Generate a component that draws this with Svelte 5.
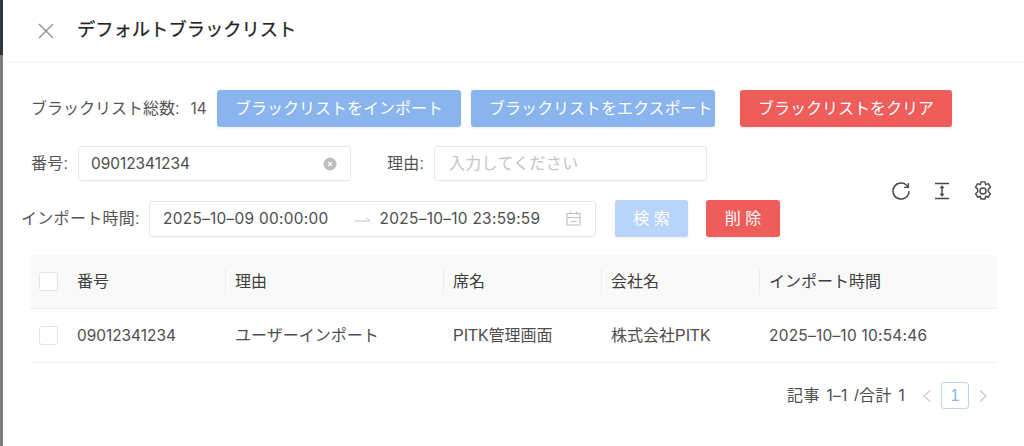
<script>
  const columns = [
    { key: 'number', label: '番号', width: 158 },
    { key: 'reason', label: '理由', width: 218 },
    { key: 'seat', label: '席名', width: 158 },
    { key: 'company', label: '会社名', width: 158 },
    { key: 'time', label: 'インポート時間', width: 228 }
  ];

  const rows = [
    {
      number: '09012341234',
      reason: 'ユーザーインポート',
      seat: 'PITK管理画面',
      company: '株式会社PITK',
      time: '2025–10–10 10:54:46'
    }
  ];

  const numeric = ['number', 'time'];
</script>

<div class="page">
  <div class="strip"></div>
  <div class="drawer">
    <header class="head">
      <svg class="close" viewBox="0 0 16 16" width="16" height="16" fill="none" stroke="#8c8c8c" stroke-width="1.3">
        <path d="M1 1l14 14M15 1L1 15" />
      </svg>
      <h1>デフォルトブラックリスト</h1>
    </header>

    <div class="body">
      <div class="actions">
        <span class="total">ブラックリスト総数:<span class="count num">14</span></span>
        <button class="btn soft wide">ブラックリストをインポート</button>
        <button class="btn soft wide">ブラックリストをエクスポート</button>
        <button class="btn danger clear">ブラックリストをクリア</button>
      </div>

      <div class="filters">
        <div class="fields">
          <div class="line first">
            <span class="label number-label">番号:</span>
            <div class="input number-input">
              <span class="num">09012341234</span>
              <svg class="clear-icon" viewBox="0 0 14 14" width="14" height="14">
                <circle cx="7" cy="7" r="6.5" fill="#bdbdbd" />
                <path d="M5 5l4 4M9 5l-4 4" stroke="#fff" stroke-width="1.2" />
              </svg>
            </div>
            <span class="label reason-label">理由:</span>
            <div class="input reason-input"><span class="placeholder">入力してください</span></div>
          </div>

          <div class="line second">
            <span class="label time-label">インポート時間:</span>
            <div class="input range">
              <span class="date num">2025–10–09 00:00:00</span>
              <svg class="arrow" viewBox="0 0 16 8" width="16" height="8" fill="none" stroke="#c4c4c4">
                <path d="M0 6h15L11 2.5" />
              </svg>
              <span class="date num">2025–10–10 23:59:59</span>
              <svg class="calendar" viewBox="0 0 15 15" width="15" height="15" fill="none" stroke="#bfbfbf" stroke-width="1.1">
                <path d="M1 2.5h13v11.5H1zM1 6.5h13M4.5 .5v3M10.5 .5v3M4.5 10.5h6" />
              </svg>
            </div>
            <button class="btn search">検 索</button>
            <button class="btn danger delete">削 除</button>
          </div>
        </div>

        <div class="tools">
          <svg viewBox="0 0 20 20" width="20" height="20" fill="none" stroke="#4a4a4a" stroke-width="1.5">
            <path d="M16.8 5.8A8 8 0 1 0 18 10" />
            <path d="M17.4 2v4.4H13" stroke-width="1.3" />
          </svg>
          <svg viewBox="0 0 20 20" width="20" height="20" fill="none" stroke="#4a4a4a" stroke-width="1.5">
            <path d="M3 2.5h14M3 17.5h14M10 6v8" />
            <path d="M8 7l2-2.4L12 7zM8 13l2 2.4 2-2.4z" fill="#4a4a4a" stroke-width="0.6" />
          </svg>
          <svg viewBox="1 1 18 18" width="20" height="20" fill="none" stroke="#4a4a4a" stroke-width="1.3" stroke-linejoin="round">
            <path d="M8.2 1.8h3.6l.6 2.5 2.4-.9 1.9 3.2-1.9 1.7v2.4l1.9 1.7-1.9 3.2-2.4-.9-.6 2.5H8.2l-.6-2.5-2.4.9-1.9-3.2 1.9-1.7V8.3L3.3 6.6l1.9-3.2 2.4.9z" />
            <circle cx="10" cy="10" r="2.7" />
          </svg>
        </div>
      </div>

      <div class="table">
        <div class="row header">
          <div class="check-cell"><span class="checkbox"></span></div>
          {#each columns as col, i}
            <div class="cell" class:divided={i > 0} style="width: {col.width}px">{col.label}</div>
          {/each}
        </div>
        {#each rows as row}
          <div class="row">
            <div class="check-cell"><span class="checkbox"></span></div>
            {#each columns as col}
              <div class="cell" class:num={numeric.includes(col.key)} class:stamp={col.key === 'time'} style="width: {col.width}px">{row[col.key]}</div>
            {/each}
          </div>
        {/each}
      </div>

      <div class="pager">
        <span class="summary">記事 <span class="num">1–1</span> /合計 <span class="num">1</span></span>
        <svg viewBox="0 0 10 14" width="10" height="14" fill="none" stroke="#c8c8c8" stroke-width="1.2">
          <path d="M8 1.5L2 7l6 5.5" />
        </svg>
        <span class="page-num">1</span>
        <svg viewBox="0 0 10 14" width="10" height="14" fill="none" stroke="#c8c8c8" stroke-width="1.2">
          <path d="M2 1.5L8 7l-6 5.5" />
        </svg>
      </div>
    </div>
  </div>
</div>

<style>
  :global(body) {
    margin: 0;
    background: #fff;
  }

  .page {
    display: flex;
    height: 446px;
    overflow: hidden;
    font-family: "Liberation Sans", "Noto Sans CJK JP", sans-serif;
    font-size: 16px;
    line-height: 24px;
    color: #4d4d4d;
  }

  .num {
    font-family: Inter, "Liberation Sans", sans-serif;
    font-size: 15.4px;
  }

  .strip {
    width: 3px;
    flex-shrink: 0;
    background: linear-gradient(#2f3542 0, #2f3542 55px, #7d7d7d 55px);
  }

  .drawer {
    flex: 1;
    min-width: 0;
  }

  .head {
    display: flex;
    align-items: center;
    height: 62px;
    padding-left: 35px;
    border-bottom: 1px solid #f3f3f3;
  }

  .close {
    margin-right: 23px;
  }

  h1 {
    margin: 0 0 2px;
    font-size: 18.3px;
    font-weight: 400;
    color: #222;
    -webkit-text-stroke: 0.25px #222;
  }

  .body {
    padding: 27px 27px 0 18px;
  }

  .actions {
    display: flex;
    align-items: center;
    height: 37px;
    padding-left: 10px;
  }

  .total {
    width: 186px;
    white-space: nowrap;
    color: #555;
  }

  .count {
    margin-left: 11px;
  }

  .btn {
    height: 37px;
    padding: 0;
    border: none;
    border-radius: 3px;
    color: #fff;
    font: inherit;
    box-shadow: 0 1px 3px rgba(0, 0, 0, 0.08);
    white-space: nowrap;
  }

  .soft {
    background: #8ab4ee;
  }

  .wide {
    width: 244px;
    margin-right: 10px;
    padding-left: 18px;
    text-align: left;
  }

  .danger {
    background: #ee5d5a;
  }

  .clear {
    width: 212px;
    margin-left: 15px;
  }

  .search {
    width: 73px;
    margin-left: 19px;
    background: #b8d4f8;
  }

  .delete {
    width: 74px;
    margin-left: 18px;
  }

  .filters {
    display: flex;
    margin-top: 19px;
  }

  .fields {
    flex: none;
    width: 850px;
  }

  .line {
    display: flex;
    align-items: center;
  }

  .first {
    height: 35px;
  }

  .second {
    height: 37px;
    margin-top: 19px;
  }

  .label {
    white-space: nowrap;
    color: #555;
    letter-spacing: 0.3px;
  }

  .number-label {
    margin-left: 10px;
    width: 47px;
  }

  .reason-label {
    margin-left: 36px;
    width: 47px;
  }

  .time-label {
    width: 128px;
  }

  .input {
    box-sizing: border-box;
    display: flex;
    align-items: center;
    height: 35px;
    padding: 0 12px;
    border: 1px solid #e6e6e6;
    border-radius: 3px;
    background: #fff;
  }

  .number-input {
    width: 273px;
    justify-content: space-between;
  }

  .clear-icon {
    margin-right: 1px;
  }

  .reason-input {
    width: 273px;
    padding-left: 14px;
  }

  .placeholder {
    color: #c4c4c4;
    letter-spacing: 0.3px;
  }

  .range {
    width: 447px;
    height: 36px;
    padding-left: 13px;
  }

  .date {
    white-space: nowrap;
    letter-spacing: 0.3px;
  }

  .stamp {
    letter-spacing: 0.27px;
  }

  .arrow {
    margin: 0 9px 0 26px;
  }

  .calendar {
    margin-left: 26px;
  }

  .tools {
    display: flex;
    gap: 21px;
    margin: 35px 0 0 20px;
  }

  .table {
    margin-top: 18px;
    margin-left: 9px;
    width: 967px;
  }

  .row {
    display: flex;
    align-items: center;
    height: 53px;
    border-bottom: 1px solid #f0f0f0;
    color: #4d4d4d;
  }

  .header {
    background: #f9f9f9;
    color: #3d3d3d;
  }

  .check-cell {
    display: flex;
    flex: none;
    padding-left: 9px;
    width: 47px;
    box-sizing: border-box;
  }

  .checkbox {
    box-sizing: border-box;
    width: 19px;
    height: 19px;
    border: 1px solid #e3e3e3;
    border-radius: 3px;
    background: #fff;
  }

  .cell {
    box-sizing: border-box;
    flex: none;
    position: relative;
    white-space: nowrap;
  }

  .cell.divided::before {
    content: "";
    position: absolute;
    left: -10px;
    top: 50%;
    width: 1px;
    height: 26px;
    margin-top: -13px;
    background: #ececec;
  }

  .pager {
    display: flex;
    align-items: center;
    justify-content: flex-end;
    margin-top: 19px;
    padding-right: 5px;
    height: 27px;
    width: 972px;
    box-sizing: border-box;
  }

  .summary {
    margin-right: 17px;
    white-space: nowrap;
    word-spacing: 2px;
    letter-spacing: 0.3px;
  }

  .page-num {
    box-sizing: border-box;
    display: flex;
    align-items: center;
    justify-content: center;
    width: 28px;
    height: 27px;
    margin: 0 9px;
    border: 1px solid #b8d4f8;
    border-radius: 3px;
    color: #8ab4ee;
  }
</style>
